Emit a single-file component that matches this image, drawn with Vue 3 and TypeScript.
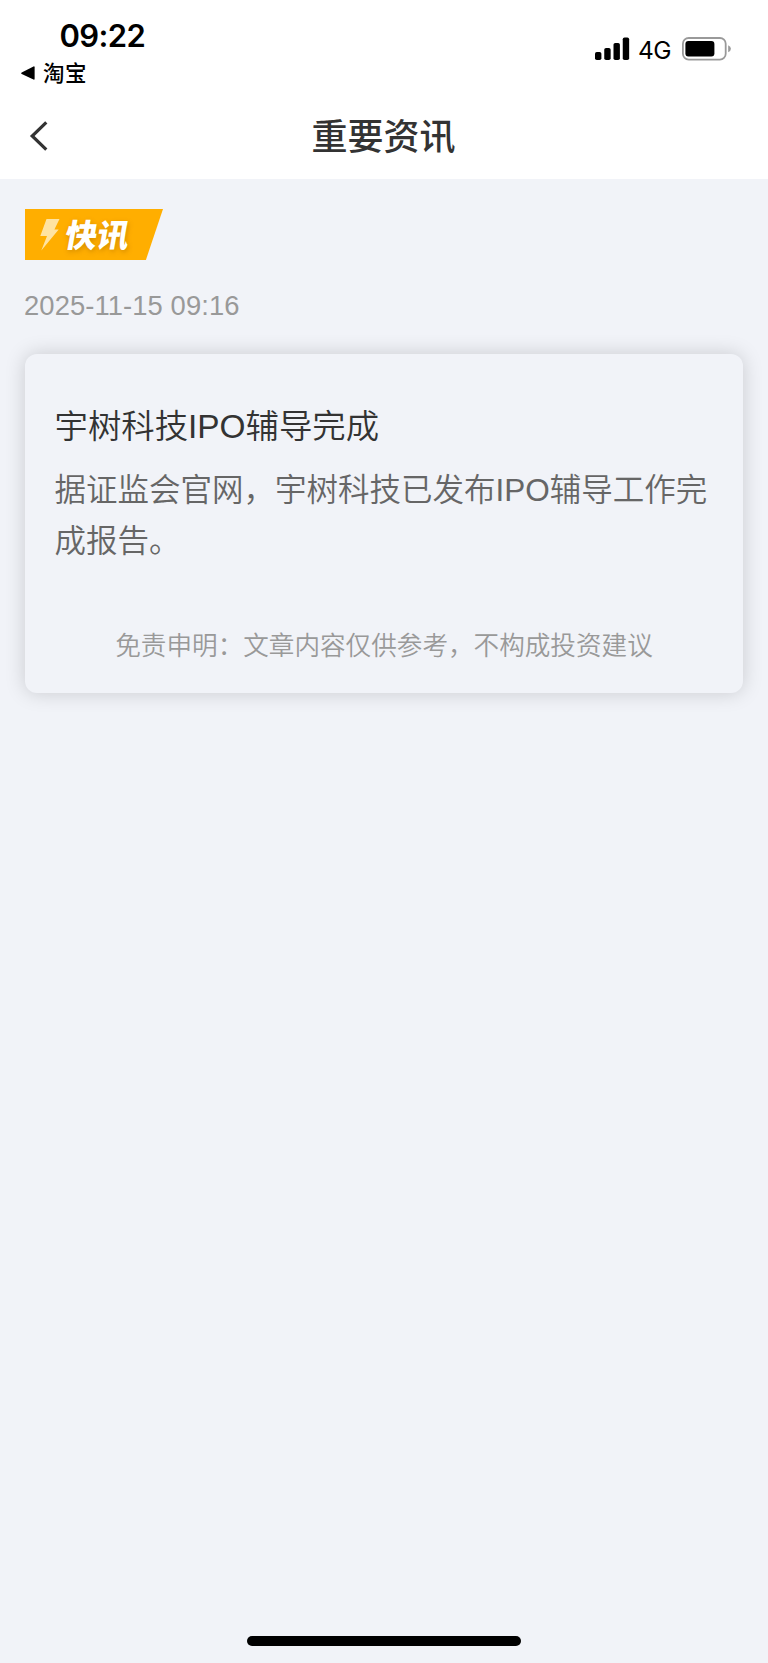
<script setup lang="ts">
interface Article {
  date: string
  title: string
  body: string
}

const article: Article = {
  date: '2025-11-15 09:16',
  title: '宇树科技IPO辅导完成',
  body: '据证监会官网，宇树科技已发布IPO辅导工作完成报告。',
}
const signalBars: number[] = [8, 12, 17, 22.5]
</script>

<template>
  <div class="screen">
    <header class="top">
      <div class="status">
        <div class="status-left">
          <div class="clock">09:22</div>
          <div class="return-app">
            <svg width="14" height="14" viewBox="0 0 14 14"><path d="M13.6 1.2v11.6q0 1.2-1.1.8L.7 7.9q-1.2-.7 0-1.5L12.5.4q1.1-.4 1.1.8Z" /></svg>
            <span>淘宝</span>
          </div>
        </div>
        <div class="status-right">
          <svg class="signal" width="35" height="24" viewBox="0 0 35 24">
            <rect v-for="(h, i) in signalBars" :key="i" :x="i * 9.25" :y="23 - h" width="6.4" :height="h" rx="1.8" />
          </svg>
          <span class="network">4G</span>
          <svg class="battery" width="50" height="24" viewBox="0 0 50 24">
            <rect x=".9" y="1" width="42.8" height="21.6" rx="5.8" fill="none" stroke="#999" stroke-width="1.8" />
            <rect x="3.4" y="4" width="29" height="15.6" rx="3" />
            <path d="M46.2 8.3q2.7 1.1 2.7 3.5t-2.7 3.5Z" fill="#999" />
          </svg>
        </div>
      </div>
      <nav class="nav">
        <svg class="back" width="20" height="32" viewBox="0 0 20 32">
          <path d="M17.3 2.3 3.2 16l14.100 13.700" fill="none" stroke="#333" stroke-width="3.200" />
        </svg>
        <h1>重要资讯</h1>
      </nav>
    </header>

    <main>
      <div class="badge">
        <svg class="bolt" width="20" height="33" viewBox="0 0 20 33"><path d="M6.5 1H19.5L14.4 11.5H18.7L1.3 32.5 7 18H.3Z" fill="#ffe3a1" /></svg>
        <span>快讯</span>
      </div>
      <time>{{ article.date }}</time>
      <article class="card">
        <h2>{{ article.title }}</h2>
        <p>{{ article.body }}</p>
        <footer>免责申明：文章内容仅供参考，不构成投资建议</footer>
      </article>
    </main>
    <div class="home-indicator"></div>
  </div>
</template>

<style>
body {
  margin: 0;
  background: #f1f3f8;
}
</style>

<style scoped>
.screen {
  box-sizing: border-box;
  width: 768px;
  height: 1663px;
  display: flex;
  flex-direction: column;
  background: #f1f3f8;
  font-family: "Liberation Sans", "Noto Sans CJK SC", sans-serif;
  color: #333;
}
.top {
  height: 179px;
  background: #fff;
}
.status {
  height: 92px;
  display: flex;
  justify-content: space-between;
  color: #000;
}
.status-left {
  padding-left: 21px;
}
.clock {
  margin: 17px 0 0 38.5px;
  height: 38px;
  font: 600 31px/38px Inter, sans-serif;
  letter-spacing: -0.6px;
}
.return-app {
  display: flex;
  align-items: center;
  gap: 8px;
  height: 36px;
  font: 500 21.5px/36px "Noto Sans CJK SC", sans-serif;
}
.return-app span {
  margin-top: -2px;
  letter-spacing: 0.5px;
}
.status-right {
  display: flex;
  align-items: center;
  height: 24px;
  margin: 37px 36px 0 0;
}
.network {
  width: 34px;
  margin: 2px 10px 0 8px;
  font: 400 24.5px/24px Inter, sans-serif;
  letter-spacing: -0.5px;
}
.nav {
  height: 87px;
  display: grid;
  grid-template-columns: 60px 1fr 60px;
  align-items: center;
}
.back {
  margin-left: 28.5px;
}
h1 {
  margin: -4px 0 0 -1px;
  text-align: center;
  font: 500 36px/52px "Noto Sans CJK SC", sans-serif;
}
main {
  flex: 1;
  padding: 30px 25px 0;
}
.badge {
  width: 138px;
  height: 51px;
  display: flex;
  align-items: center;
  background: #ffae00;
  clip-path: polygon(0 0, 100% 0, 87.6% 100%, 0 100%);
}
.bolt {
  margin-left: 15px;
}
.badge span {
  margin-left: 5.5px;
  margin-top: -2px;
  color: #fff;
  font: 900 32px/51px "Noto Sans CJK SC", sans-serif;
  transform: skewX(-10deg);
  text-shadow: 1px 2px 5px rgba(150, 90, 0, 0.4);
}
time {
  display: block;
  margin: 29px 0 0 -1px;
  height: 34px;
  color: #999;
  font-size: 27.4px;
  letter-spacing: 0.08px;
  line-height: 34px;
}
.card {
  box-sizing: border-box;
  height: 339px;
  margin-top: 31px;
  padding: 47px 29.5px 0;
  border-radius: 12px;
  background: #f1f3f8;
  box-shadow: 0 0 20px rgba(10, 8, 0, 0.17);
}
h2 {
  margin: 0;
  font-weight: 350;
  font-size: 33.4px;
  line-height: 52px;
}
p {
  margin: 12px -10px 0 0;
  color: #666;
  font-weight: 350;
  font-size: 31.5px;
  line-height: 51px;
}
footer {
  margin-top: 60px;
  color: #999;
  font-weight: 350;
  font-size: 25.6px;
  line-height: 38px;
  text-align: center;
}
.home-indicator {
  width: 274px;
  height: 10px;
  margin: 0 auto 17px;
  border-radius: 5px;
  background: #000;
}
</style>
